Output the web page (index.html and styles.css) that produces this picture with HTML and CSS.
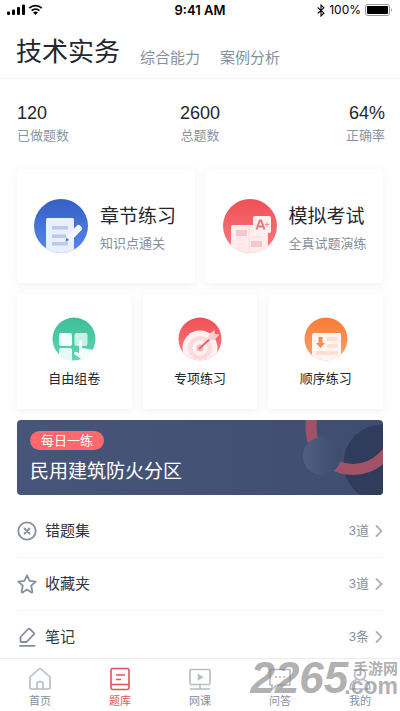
FILE: index.html
```html
<!DOCTYPE html>
<html lang="zh-CN">
<head>
<meta charset="utf-8">
<meta name="viewport" content="width=device-width, initial-scale=1">
<title>题库</title>
<link rel="stylesheet" href="styles.css">
</head>
<body>
<div class="status">
  <svg class="signal" width="36" height="12" viewBox="0 0 36 12" aria-hidden="true">
    <rect x="0" y="7.5" width="3" height="3.5" rx="1"/><rect x="5" y="5.5" width="3" height="5.5" rx="1"/><rect x="10" y="3" width="3" height="8" rx="1"/><rect x="15" y="0.5" width="3" height="10.5" rx="1"/>
    <g fill="none" stroke="#000" stroke-width="1.7"><path d="M22.3 4.2a9 9 0 0 1 12.4 0"/><path d="M24.6 6.6a5.8 5.8 0 0 1 7.8 0"/></g>
    <path d="M28.5 11l-2.4-2.5a3.6 3.6 0 0 1 4.8 0z"/>
  </svg>
  <span class="time">9:41 AM</span>
  <span class="power">
    <svg width="8" height="13" viewBox="0 0 8 13" aria-hidden="true"><path d="M.7 3.5l6.2 5.7L4 12V1l2.900 2.800L.7 9.500" fill="none" stroke="#000" stroke-width="1.1"/></svg>
    <span>100%</span>
    <svg width="28" height="12" viewBox="0 0 28 12" aria-hidden="true"><rect x=".5" y=".5" width="24" height="11" rx="2.5" fill="#fff" stroke="#999"/><rect x="2" y="2" width="21" height="8" rx="1"/><path d="M26 4q2 2 0 4z" fill="#999"/></svg>
  </span>
</div>
<header class="subjects">
  <h1>技术实务</h1>
  <a href="#ability">综合能力</a>
  <a href="#cases">案例分析</a>
</header>
<main>
  <section class="stats">
    <div><strong>120</strong><span>已做题数</span></div>
    <div class="mid"><strong>2600</strong><span>总题数</span></div>
    <div class="end"><strong>64%</strong><span>正确率</span></div>
  </section>
  <section class="duo">
    <a class="card wide" href="#chapter">
      <svg width="54" height="54" viewBox="0 0 54 54" aria-hidden="true">
        <defs><linearGradient id="blue" x1="0" y1="0" x2="0" y2="1"><stop stop-color="#355fc5"/><stop offset="1" stop-color="#5688ed"/></linearGradient><clipPath id="c54"><circle cx="27" cy="27" r="27"/></clipPath></defs>
        <g clip-path="url(#c54)"><rect width="54" height="54" fill="url(#blue)"/>
        <rect x="12" y="19" width="28" height="36" rx="1.5" fill="#e9effd"/>
        <path d="M18 27h16v3.500H18zM18 35.500h14V39H18zM18 43h16v3.500H18z" fill="#b9c9ef"/></g>
        <path d="M43 26.500q1.500-1.500 3 0l1.500 1.500q1.500 1.500 0 3L37.500 41.500l-6 1.500 1.500-6z" fill="#f5f8ff"/><path d="M32.500 38.500l2.500 2.500-3.500 2z" fill="#4470d4"/>
      </svg>
      <span class="copy"><b>章节练习</b><small>知识点通关</small></span>
    </a>
    <a class="card wide" href="#exam">
      <svg width="54" height="54" viewBox="0 0 54 54" aria-hidden="true">
        <defs><linearGradient id="red" x1="0" y1="0" x2="0" y2="1"><stop stop-color="#ee5055"/><stop offset="1" stop-color="#fb7c80"/></linearGradient></defs>
        <g clip-path="url(#c54)"><rect width="54" height="54" fill="url(#red)"/>
        <rect x="8" y="26" width="37" height="30" rx="1.500" fill="#ffecec"/><path d="M26 26v28" stroke="#fbdcdd"/>
        <path d="M13 31h11v6H13zM28 42h11v6H28z" fill="#f9c6c8"/><path d="M13 41h10M13 45h10M13 49h10M29 38h10" stroke="#ffe0e0"/></g>
        <rect x="30" y="17" width="18" height="17" rx="1.500" fill="#fff0f0"/>
        <path d="M33.500 30.500l3.300-9h1.400l3.300 9M35 27.500h5" fill="none" stroke="#e9787d" stroke-width="2"/><path d="M42 25.500h4M44 23.500v4" stroke="#ee9296" stroke-width="1.200"/>
      </svg>
      <span class="copy"><b>模拟考试</b><small>全真试题演练</small></span>
    </a>
  </section>
  <section class="trio">
    <a class="card tall" href="#custom">
      <svg width="44" height="44" viewBox="0 0 44 44" aria-hidden="true">
        <defs><linearGradient id="green" x1="0" y1="0" x2="0" y2="1"><stop stop-color="#3fbd98"/><stop offset="1" stop-color="#63d5b4"/></linearGradient><clipPath id="c44"><circle cx="22" cy="22" r="21.500"/></clipPath></defs>
        <g clip-path="url(#c44)"><rect width="44" height="44" fill="url(#green)"/>
        <rect x="7" y="16" width="13" height="13" rx="2" fill="#f1fffb"/><rect x="22.500" y="16" width="13" height="13" rx="2" fill="#c6f1e3"/><rect x="7" y="31" width="13" height="14" rx="2" fill="#e6fbf5"/></g>
        <path d="M27 23.500q1.500-2 3 0V31l9 1.500q2 .5 1 2.500-3 5-8 7.500h-2L22 37q0-3 3-2l2 1.500z" fill="#f4fffc"/>
      </svg>
      <span>自由组卷</span>
    </a>
    <a class="card tall" href="#special">
      <svg width="44" height="44" viewBox="0 0 44 44" aria-hidden="true">
        <g clip-path="url(#c44)"><rect width="44" height="44" fill="url(#red)"/>
        <circle cx="22" cy="31" r="17.500" fill="#fff1f1"/><circle cx="22" cy="31" r="12" fill="#fbdcdd"/><circle cx="22" cy="31" r="7.500" fill="#fff0f0"/><circle cx="22" cy="31" r="3.500" fill="#f7b7ba"/></g>
        <path d="M21 32l14-13" stroke="#e3666d" stroke-width="2"/><path d="M30 22l1.500-5 5-4 .5 4 4.500.5-4.500 5-5 1z" fill="#fbcdd0"/>
      </svg>
      <span>专项练习</span>
    </a>
    <a class="card tall" href="#ordered">
      <svg width="44" height="44" viewBox="0 0 44 44" aria-hidden="true">
        <defs><linearGradient id="orange" x1="0" y1="0" x2="0" y2="1"><stop stop-color="#f77b36"/><stop offset="1" stop-color="#ffa16c"/></linearGradient></defs>
        <g clip-path="url(#c44)"><rect width="44" height="44" fill="url(#orange)"/>
        <rect x="8" y="16" width="29" height="30" rx="1.500" fill="#fff5f0"/><path d="M23 20h11v4H23zM23 27h11v4H23zM12 34h22v4H12z" fill="#ffe0d3"/>
        <path d="M14.500 20h4v6H21l-4.500 5-4.500-5h2.500z" fill="#f48b5c"/></g>
      </svg>
      <span>顺序练习</span>
    </a>
  </section>
  <a class="banner" href="#daily">
    <svg class="orbit" width="90" height="75" viewBox="0 0 90 75" aria-hidden="true">
      <defs><linearGradient id="ball"><stop stop-color="#506083"/><stop offset="1" stop-color="#3d4b6c"/></linearGradient></defs>
      <circle cx="89" cy="43" r="38.500" fill="#303c5b"/>
      <circle cx="60" cy="7.500" r="42" fill="none" stroke="#a25266" stroke-width="11"/>
      <circle cx="29" cy="36" r="19" fill="url(#ball)"/>
    </svg>
    <span class="pill">每日一练</span>
    <strong>民用建筑防火分区</strong>
  </a>
  <nav class="list" aria-label="我的练习">
    <a href="#wrong">
      <svg class="line" width="20" height="20" viewBox="0 0 20 20" aria-hidden="true"><circle cx="10" cy="10" r="8.700"/><path d="M7.500 7.500l5 5M12.500 7.500l-5 5"/></svg>
      <span>错题集</span><em>3道</em><svg class="chev" width="8" height="12" viewBox="0 0 8 12" aria-hidden="true"><path d="M1.500 1l5 5-5 5"/></svg>
    </a>
    <a href="#saved">
      <svg class="line" width="20" height="20" viewBox="0 0 20 20" aria-hidden="true"><path d="M10 1.300l2.600 5.500 6.100.8-4.500 4.100 1.200 6.200q-.2.800-1 .5L10 15.600l-4.400 2.800q-.8.300-1-.5l1.200-6.200L1.300 7.600l6.100-.8z"/></svg>
      <span>收藏夹</span><em>3道</em><svg class="chev" width="8" height="12" viewBox="0 0 8 12" aria-hidden="true"><path d="M1.500 1l5 5-5 5"/></svg>
    </a>
    <a href="#notes">
      <svg class="line" width="20" height="20" viewBox="0 0 20 20" aria-hidden="true"><path d="M3 18.800h14.500M3.500 10l7.700-8q.8-.8 1.600 0l4 3.800q.8.800 0 1.600L9.500 15H4.300q-.8 0-.8-.8z"/></svg>
      <span>笔记</span><em>3条</em><svg class="chev" width="8" height="12" viewBox="0 0 8 12" aria-hidden="true"><path d="M1.500 1l5 5-5 5"/></svg>
    </a>
  </nav>
</main>
<footer>
  <nav class="tabs" aria-label="主导航">
    <a href="#home"><svg width="24" height="24" viewBox="0 0 24 24" aria-hidden="true"><path d="M2 10L11 2q1-.8 2 0l9 8v11q0 1-1 1H3q-1 0-1-1zM9 22v-5q0-2.500 3-2.500t3 2.500v5"/></svg><span>首页</span></a>
    <a class="on" href="#bank" aria-current="page"><svg width="24" height="24" viewBox="0 0 24 24" aria-hidden="true"><rect x="3" y="1.500" width="18" height="21" rx="2"/><path d="M3 17.500h18M8 8h9M8 12.500h5"/></svg><span>题库</span></a>
    <a href="#class"><svg width="24" height="24" viewBox="0 0 24 24" aria-hidden="true"><rect x="2" y="2.500" width="20" height="15" rx="1"/><path d="M12 17.500V22M2 22h20"/><path d="M10.500 8l3.500 2.200-3.500 2.200z" fill="currentColor"/></svg><span>网课</span></a>
    <a href="#qa"><svg width="24" height="24" viewBox="0 0 24 24" aria-hidden="true"><path d="M2 2.500h20V18H9l-5 4.500V18H2z"/><path d="M7 10h2M11 10h2M15 10h2"/></svg><span>问答</span></a>
    <a href="#me"><svg width="24" height="24" viewBox="0 0 24 24" aria-hidden="true"><circle cx="12" cy="7.500" r="5.500"/><path d="M8.500 12.500Q2 15 2 22h20q0-7-6.500-9.500"/></svg><span>我的</span></a>
  </nav>
  <div class="mark"><span class="num">2265</span><span class="site"><span class="cn">手游网</span><span class="com">.com</span></span></div>
</footer>
</body>
</html>
```
FILE: styles.css
```css
* { box-sizing: border-box; }
body {
  margin: 0;
  min-height: 100vh;
  display: flex;
  flex-direction: column;
  background: #fff;
  color: #24272e;
  font-family: "Liberation Sans", "Noto Sans CJK SC", sans-serif;
}
a { color: inherit; text-decoration: none; }
svg { flex: none; display: block; }

.status {
  display: grid;
  grid-template-columns: 1fr auto 1fr;
  align-items: center;
  height: 20px;
  padding: 0 7px;
  color: #000;
  font: 400 12px/20px Inter, sans-serif;
}
.time { font-size: 13px; font-weight: 600; }
.power { display: flex; align-items: center; justify-content: flex-end; gap: 4px; }

.subjects {
  display: flex;
  align-items: flex-end;
  gap: 20px;
  height: 59px;
  padding: 0 16px 7px;
  border-bottom: 1px solid #f5f6f8;
  color: #8490a0;
  font-size: 15px;
  line-height: 26px;
}
.subjects h1 {
  margin: 0;
  color: #24272e;
  font-size: 26px;
  line-height: 38px;
  font-weight: 400;
}

main { flex: 1; padding: 0 17px; }

.stats { display: grid; grid-template-columns: 1fr 1fr 1fr; padding: 22px 0; }
.stats div { display: flex; flex-direction: column; }
.stats .mid { align-items: center; }
.stats .end { align-items: flex-end; margin-right: -2px; }
.stats strong { font-size: 18px; line-height: 24px; font-weight: 400; }
.stats span { color: #8b95a1; font-size: 13px; line-height: 22px; }

.duo, .trio { display: grid; gap: 11px; }
.duo { grid-template-columns: 1fr 1fr; }
.trio { grid-template-columns: 1fr 1fr 1fr; margin-top: 11px; }
.card { display: flex; align-items: center; border-radius: 4px; background: #fff; box-shadow: 0 2px 10px rgba(80, 100, 140, .09); }
.wide { height: 114px; gap: 12px; padding-left: 17px; }
.copy { display: flex; flex-direction: column; padding-top: 5px; white-space: nowrap; }
.copy b { font-size: 19px; line-height: 30px; font-weight: 400; }
.copy small { color: #8490a0; font-size: 13px; line-height: 24px; }
.tall { flex-direction: column; height: 115px; padding-top: 23px; gap: 8px; font-size: 13px; line-height: 20px; }

.banner {
  display: flex;
  flex-direction: column;
  align-items: flex-start;
  position: relative;
  overflow: hidden;
  height: 75px;
  margin-top: 11px;
  padding: 11px 13px;
  border-radius: 4px;
  background: linear-gradient(90deg, #48557a, #3f4d70);
  color: #fff;
}
.orbit { position: absolute; top: 0; right: 0; }
.pill { padding: 0 11px; border-radius: 10px; background: #ff686c; font-size: 13px; line-height: 19px; }
.banner strong { font-size: 19px; line-height: 28px; margin-top: 8px; font-weight: 400; }

.list { margin-top: 10px; }
.list a { display: flex; align-items: center; padding: 14px 0; color: #32353b; font-size: 15px; line-height: 24px; }
.list a + a { border-top: 1px solid #f3f4f6; }
.list a:last-child { padding-bottom: 8px; }
.list span { flex: 1; padding-left: 8px; }
.list em { padding-right: 6px; color: #8490a0; font-size: 13px; font-style: normal; }
.line, .chev { fill: none; stroke: #858f9b; stroke-width: 1.8; stroke-linejoin: round; stroke-linecap: round; }
.chev { stroke: #aeb4bc; }

footer { position: relative; }
.tabs { display: grid; grid-template-columns: repeat(5, 1fr); height: 53px; padding-top: 8px; border-top: 1px solid #ebecef; }
.tabs a { display: flex; flex-direction: column; align-items: center; gap: 1px; color: #8490a0; font-size: 11px; line-height: 18px; }
.tabs svg { fill: none; stroke: #b5bcc5; stroke-width: 1.6; color: #b5bcc5; }
.tabs .on, .tabs .on svg { color: #e45255; stroke: #e45255; }
.tabs .on span { stroke: none; }

.mark { position: absolute; top: -2px; right: 2px; display: flex; color: rgba(125, 125, 125, .62); font-weight: 700; pointer-events: none; }
.num { font-size: 44px; line-height: 44px; font-style: italic; }
.site { display: flex; flex-direction: column; align-items: flex-end; margin-left: -4px; padding-top: 5px; }
.cn { font-size: 15px; line-height: 15px; }
.com { font-size: 23px; line-height: 22px; margin-top: -1px; }
```
